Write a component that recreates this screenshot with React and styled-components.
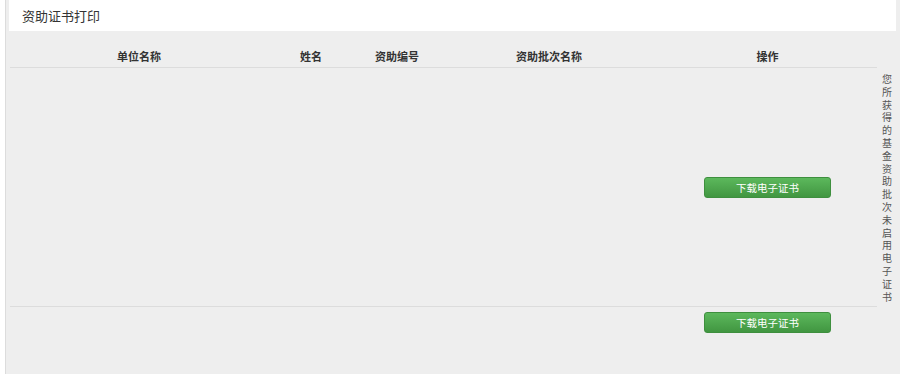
import React from "react";
import styled, { createGlobalStyle } from "styled-components";

const GlobalStyle = createGlobalStyle`
  html, body {
    margin: 0;
    padding: 0;
    background: #fff;
  }
  body {
    font-family: "Noto Sans CJK SC", "Liberation Sans", sans-serif;
  }
`;

const Page = styled.div`
  margin-left: 5px;
  border-left: 1px solid #dcdcdc;
  background: #eeeeee;
  min-height: 374px;
  padding: 0 4px 0 3px;
  box-sizing: border-box;
`;

const TitleBar = styled.div`
  height: 31px;
  background: #fff;
  display: flex;
  align-items: center;
  padding-left: 13px;
  font-size: 13px;
  color: #333;
`;

const Grid = styled.div`
  display: grid;
  grid-template-columns: 258px 86px 86px 218px 219px 18px;
  margin-left: 1px;
`;

const HeadCell = styled.div`
  height: 37px;
  box-sizing: border-box;
  padding-top: 17px;
  line-height: 16px;
  text-align: center;
  font-size: 11px;
  font-weight: bold;
  color: #333;
  border-bottom: ${(p) => (p.$plain ? "none" : "1px solid #dcdcdc")};
`;

const Cell = styled.div`
  display: flex;
  align-items: ${(p) => (p.$top ? "flex-start" : "center")};
  justify-content: center;
  padding: ${(p) => (p.$top ? "5px 0" : "0")};
  border-bottom: ${(p) => (p.$last ? "none" : "1px solid #dcdcdc")};
  font-size: 11px;
  color: #333;
`;

const Note = styled.div`
  padding: 5px 0 4px 1px;
  width: 18px;
  text-align: center;
  font-size: 10px;
  line-height: 12.8px;
  color: #555;
  word-break: break-all;
`;

const Blank = styled.div``;

const DownloadBtn = styled.button`
  width: 127px;
  height: 21px;
  border: 1px solid #3e8f3e;
  border-radius: 3px;
  background: linear-gradient(to bottom, #5cb85c 0%, #419641 100%);
  color: #fff;
  font-family: "Noto Sans CJK SC", sans-serif;
  font-size: 10.5px;
  padding: 0;
  cursor: pointer;
`;

const columns = ["单位名称", "姓名", "资助编号", "资助批次名称", "操作"];

const rows = [
  { note: "您所获得的基金资助批次未启用电子证书" },
  { note: "" },
];

function Row({ row, last }) {
  const top = !row.note;
  return (
    <>
      <Cell $top={top} $last={last} />
      <Cell $top={top} $last={last} />
      <Cell $top={top} $last={last} />
      <Cell $top={top} $last={last} />
      <Cell $top={top} $last={last}>
        <DownloadBtn>下载电子证书</DownloadBtn>
      </Cell>
      {row.note ? <Note>{row.note}</Note> : <Blank />}
    </>
  );
}

export default function App() {
  return (
    <>
      <GlobalStyle />
      <Page>
        <TitleBar>资助证书打印</TitleBar>
        <Grid>
          {columns.map((c) => (
            <HeadCell key={c}>{c}</HeadCell>
          ))}
          <HeadCell $plain />
          {rows.map((r, i) => (
            <Row key={i} row={r} last={i === rows.length - 1} />
          ))}
        </Grid>
      </Page>
    </>
  );
}
